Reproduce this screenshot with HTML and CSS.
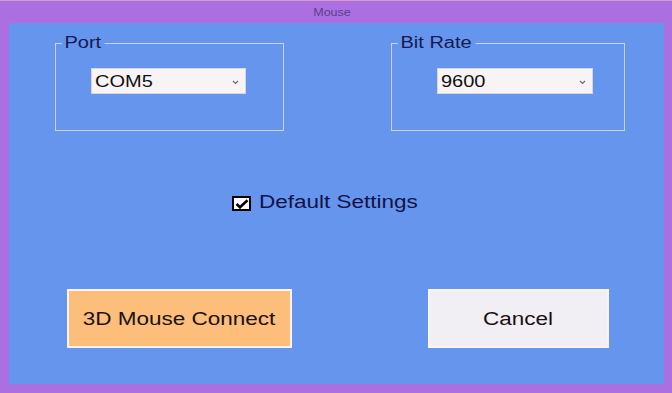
FILE: index.html
```html
<!DOCTYPE html>
<html>
<head>
<meta charset="utf-8">
<link rel="stylesheet" href="styles.css">
</head>
<body>
<div class="window">
  <div class="titlebar"><span class="wide">Mouse</span></div>
  <div class="panel">
    <div class="groups">
      <div class="group group-port">
        <span class="group-label">Port</span>
        <div class="combo combo-port">
          <span class="wide">COM5</span>
          <svg class="chev" width="7" height="5" viewBox="0 0 7 5"><polyline points="1,1 3.5,3.5 6,1" fill="none" stroke="#6a6a70" stroke-width="1.2"/></svg>
        </div>
      </div>
      <div class="group group-bit">
        <span class="group-label">Bit Rate</span>
        <div class="combo combo-bit">
          <span class="wide">9600</span>
          <svg class="chev" width="7" height="5" viewBox="0 0 7 5"><polyline points="1,1 3.5,3.5 6,1" fill="none" stroke="#6a6a70" stroke-width="1.2"/></svg>
        </div>
      </div>
    </div>
    <div class="check-row">
      <span class="checkbox">
        <svg width="14" height="10" viewBox="0 0 14 10"><polyline points="1.5,5 5,8.3 12.5,1.2" fill="none" stroke="#000" stroke-width="2.6"/></svg>
      </span>
      <span class="wide check-text">Default Settings</span>
    </div>
    <div class="buttons">
      <div class="btn btn-connect"><span class="wide">3D Mouse Connect</span></div>
      <div class="btn btn-cancel"><span class="wide">Cancel</span></div>
    </div>
  </div>
</div>
</body>
</html>
```
FILE: styles.css
```css
* { box-sizing: border-box; }
body {
  margin: 0;
  font-family: "Liberation Sans", Arial, sans-serif;
  background: #a66fe0;
}
.window {
  width: 672px;
  height: 393px;
  background: #ab6fe2;
  border-top: 1px solid #d49cc0;
  display: flex;
  flex-direction: column;
}
.wide {
  display: inline-block;
  transform: scaleX(1.25);
  transform-origin: left center;
  white-space: nowrap;
}
.titlebar {
  height: 22px;
  display: flex;
  justify-content: center;
  align-items: center;
  font-size: 10px;
  color: #5e3f86;
  padding-right: 8px;
}
.titlebar .wide { transform-origin: center; }
.panel {
  flex: 1;
  margin: 0 8px 9px 9px;
  background: #6595ec;
  padding-top: 20px;
  display: flex;
  flex-direction: column;
}
.groups {
  display: flex;
  padding-left: 46px;
  gap: 107px;
}
.group {
  position: relative;
  height: 88px;
  border: 1px solid #c9d2e6;
  padding-top: 24px;
}
.group-port { width: 229px; padding-left: 35px; }
.group-bit { width: 234px; padding-left: 45px; }
.group-label {
  position: absolute;
  left: 6px;
  top: -10px;
  padding: 0 3px 0 2px;
  background: #6595ec;
  font-size: 16px;
  line-height: 18px;
  color: #161a52;
  transform: scaleX(1.25);
  transform-origin: left center;
}
.combo {
  height: 26px;
  background: #f8f4f4;
  border: 1px solid #d4d6e2;
  display: flex;
  align-items: center;
  justify-content: space-between;
  padding: 1px 6px 0 3px;
  font-size: 16px;
  color: #111;
}
.combo-port { width: 155px; }
.combo-bit { width: 156px; }
.chev { margin-top: 1px; }
.check-row {
  margin-top: 60px;
  padding-left: 223px;
  height: 22px;
  display: flex;
  align-items: flex-start;
  font-size: 18px;
  line-height: 22px;
  color: #12124a;
}
.checkbox {
  width: 19px;
  height: 15px;
  margin-top: 5px;
  margin-right: 8px;
  border: 2px solid #000;
  background: #fff;
  display: flex;
  align-items: center;
  justify-content: center;
}
.buttons {
  margin-top: 76px;
  padding-left: 58px;
  display: flex;
  gap: 136px;
}
.btn {
  height: 59px;
  border: 2px solid #fbf3ee;
  display: flex;
  align-items: center;
  justify-content: center;
  padding-top: 2px;
  font-size: 18px;
  color: #1a1212;
}
.btn .wide { transform-origin: center; }
.btn-connect { width: 225px; background: #fdbe7c; }
.btn-cancel { width: 181px; background: #f1eff4; }
```
